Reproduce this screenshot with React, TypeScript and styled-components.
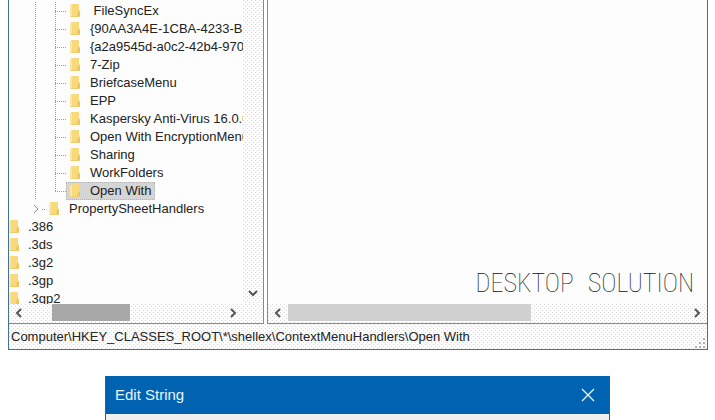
import React from "react";
import styled, { createGlobalStyle, css } from "styled-components";

const GlobalStyle = createGlobalStyle`
  * { box-sizing: border-box; }
  body {
    margin: 0;
    background: #ffffff;
    color: #222222;
    font: 13px/18px "Liberation Sans", Arial, sans-serif;
  }
`;

const stipple = css`
  background-color: #fdfdfd;
  background-image: conic-gradient(at 1px 1px, transparent 75%, #d8d8d8 0),
    conic-gradient(at 1px 1px, transparent 75%, #d8d8d8 0);
  background-position: 0 0, 2px 2px;
  background-size: 4px 4px;
`;

const dotsDown = "repeating-linear-gradient(180deg, #9c9c9c 0 1px, transparent 1px 2px)";
const dotsAcross = "repeating-linear-gradient(90deg, #9c9c9c 0 1px, transparent 1px 2px)";

const Page = styled.div`
  height: 100vh;
  display: flex;
  flex-direction: column;
  align-items: center;
  overflow: hidden;
`;

const RegistryWindow = styled.main`
  align-self: stretch;
  flex: 1;
  min-height: 0;
  margin: 0 7px 26px 8px;
  display: flex;
  flex-direction: column;
  border: 1px solid #3f739b;
  border-top: 0;
`;

const Panes = styled.div`
  flex: 1;
  min-height: 0;
  display: grid;
  grid-template-columns: 255px minmax(0, 1fr);
  gap: 3px;
`;

const Pane = styled.section<{ $side: "left" | "right" }>`
  min-width: 0;
  min-height: 0;
  display: flex;
  flex-direction: column;
  background: #fdfdfd;
  border-bottom: 1px solid #858a94;
  ${({ $side }) => ($side === "left" ? "border-right: 1px solid #858a94;" : "border-left: 1px solid #858a94;")}
`;

const PaneBody = styled.div`
  flex: 1;
  min-height: 0;
  display: flex;
`;

const Tree = styled.ul`
  flex: 1;
  min-width: 0;
  margin: 0;
  padding: 2px 0 0;
  list-style: none;
  overflow: hidden;
`;

const TreeRow = styled.li`
  height: 18px;
  display: flex;
  white-space: nowrap;
`;

const Indent = styled.span`
  flex: none;
  width: 26px;
`;

const Guide = styled.span`
  flex: none;
  width: 20px;
  background: ${dotsDown} 0 0 / 1px 100% no-repeat;
`;

const Branch = styled.span<{ $last?: boolean }>`
  flex: none;
  width: 11px;
  background: ${dotsDown} 0 0 / 1px ${({ $last }) => ($last ? "50%" : "100%")} no-repeat,
    ${dotsAcross} 0 9px / 100% 1px no-repeat;
`;

const Expander = styled.button`
  flex: none;
  width: 14px;
  margin-left: -4px;
  padding: 0;
  border: 0;
  background: ${dotsAcross} 11px 9px / 3px 1px no-repeat;
  display: flex;
  align-items: center;
`;

const Item = styled.span<{ $selected?: boolean; $root?: boolean }>`
  display: flex;
  align-items: center;
  gap: 9px;
  padding: 0 4px;
  ${({ $root }) => $root && "padding-left: 0; gap: 8px;"}
  ${({ $selected }) => $selected && "background: #d5d5d5; outline: 1px dotted #b4b4b4; outline-offset: -1px;"}
`;

const Label = styled.span`
  white-space: pre;
`;

const Bar = styled.div`
  flex: none;
  height: 19px;
  display: flex;
  ${stipple}
`;

const SideBar = styled.div`
  flex: none;
  width: 20px;
  padding-bottom: 2px;
  display: flex;
  flex-direction: column;
  justify-content: flex-end;
  ${stipple}
`;

const ArrowButton = styled.button`
  flex: none;
  width: 20px;
  height: 18px;
  padding: 0;
  border: 0;
  background: transparent;
  display: flex;
  align-items: center;
  justify-content: center;
`;

const Track = styled.div`
  flex: 1;
  display: flex;
`;

const Thumb = styled.div<{ $start: number; $size: number; $tone: string }>`
  margin-left: ${({ $start }) => $start}%;
  width: ${({ $size }) => $size}%;
  height: 17px;
  background: ${({ $tone }) => $tone};
`;

const Corner = styled.div`
  flex: none;
  width: 20px;
`;

const Values = styled.div`
  flex: 1;
  display: flex;
  align-items: flex-end;
  justify-content: flex-end;
  padding: 0 13px 5px;
`;

const Signature = styled.p`
  margin: 0;
  display: flex;
  gap: 14px;
  color: #111111;
  font: 100 26px/32px "Roboto Condensed", Roboto, sans-serif;
  white-space: nowrap;
`;

const StatusBar = styled.footer`
  flex: none;
  height: 25px;
  padding-left: 2px;
  display: flex;
  align-items: center;
  justify-content: space-between;
  ${stipple}
`;

const Grip = styled.svg`
  align-self: flex-end;
`;

const Dialog = styled.section`
  flex: none;
  width: 505px;
  max-width: 100%;
  border: 1px solid #1b64a0;
  border-top: 0;
  border-bottom: 0;
  background: #f0f0f0;
  padding-bottom: 6px;
`;

const TitleBar = styled.header`
  height: 38px;
  padding: 0 5px 0 9px;
  display: flex;
  align-items: center;
  justify-content: space-between;
  background: #0063b1;
`;

const Title = styled.h1`
  margin: 0;
  color: #e8f4fc;
  font-size: 15px;
  font-weight: 400;
`;

const CloseButton = styled.button`
  width: 32px;
  height: 32px;
  padding: 0;
  border: 0;
  background: transparent;
  display: flex;
  align-items: center;
  justify-content: center;
`;

function Folder() {
  return (
    <svg width="11" height="14" viewBox="0 0 11 14" aria-hidden="true">
      <path d="M1 0h8v6l1 1v6H1z" fill="#f8d97c" />
      <path d="M0 1h2v12H0z" fill="#fbe6a4" />
      <path d="M8 7l2 1v5H7z" fill="#edc55f" />
      <path d="M1 12h9v1H1z" fill="#f0cc70" />
    </svg>
  );
}

const turns = { right: 0, down: 90, left: 180 };

function Chevron({ to, color = "#555555", weight = 2 }: { to: keyof typeof turns; color?: string; weight?: number }) {
  return (
    <svg width="10" height="10" viewBox="0 0 10 10" aria-hidden="true">
      <path
        d="M3 1l4 4-4 4"
        transform={`rotate(${turns[to]} 5 5)`}
        fill="none"
        stroke={color}
        strokeWidth={weight}
      />
    </svg>
  );
}

function ScrollBar({ start, size, tone, corner }: { start: number; size: number; tone: string; corner?: boolean }) {
  return (
    <Bar>
      <ArrowButton aria-label="Scroll left"><Chevron to="left" /></ArrowButton>
      <Track><Thumb $start={start} $size={size} $tone={tone} /></Track>
      <ArrowButton aria-label="Scroll right"><Chevron to="right" /></ArrowButton>
      {corner && <Corner />}
    </Bar>
  );
}

const handlers = [
  " FileSyncEx",
  "{90AA3A4E-1CBA-4233-B8BB-535773D48449}",
  "{a2a9545d-a0c2-42b4-9708-a0b2badd77c8}",
  "7-Zip",
  "BriefcaseMenu",
  "EPP",
  "Kaspersky Anti-Virus 16.0.0",
  "Open With EncryptionMenu",
  "Sharing",
  "WorkFolders",
  "Open With",
];

const extensions = [".386", ".3ds", ".3g2", ".3gp", ".3gp2"];

export default function App() {
  return (
    <Page>
      <GlobalStyle />
      <RegistryWindow>
        <Panes>
          <Pane $side="left">
            <PaneBody>
              <Tree>
                {handlers.map((name) => {
                  const selected = name === "Open With";
                  return (
                    <TreeRow key={name}>
                      <Indent />
                      <Guide />
                      <Branch $last={selected} />
                      <Item $selected={selected}><Folder /><Label>{name}</Label></Item>
                    </TreeRow>
                  );
                })}
                <TreeRow>
                  <Indent />
                  <Expander aria-label="Expand PropertySheetHandlers">
                    <Chevron to="right" color="#8a8a8a" weight={1} />
                  </Expander>
                  <Item><Folder /><Label>PropertySheetHandlers</Label></Item>
                </TreeRow>
                {extensions.map((name) => (
                  <TreeRow key={name}>
                    <Item $root><Folder /><Label>{name}</Label></Item>
                  </TreeRow>
                ))}
              </Tree>
              <SideBar>
                <ArrowButton aria-label="Scroll down"><Chevron to="down" /></ArrowButton>
              </SideBar>
            </PaneBody>
            <ScrollBar start={12} size={40} tone="#a8a8a8" corner />
          </Pane>
          <Pane $side="right">
            <Values>
              <Signature><span>DESKTOP</span> <span>SOLUTION</span></Signature>
            </Values>
            <ScrollBar start={0} size={61} tone="#d0d0d0" />
          </Pane>
        </Panes>
        <StatusBar>
          <span>Computer\HKEY_CLASSES_ROOT\*\shellex\ContextMenuHandlers\Open With</span>
          <Grip width="12" height="12" viewBox="0 0 12 12" aria-hidden="true">
            <path d="M8 1h2v2H8zM8 5h2v2H8zM8 9h2v2H8zM4 5h2v2H4zM4 9h2v2H4zM0 9h2v2H0z" fill="#b0b0b0" />
          </Grip>
        </StatusBar>
      </RegistryWindow>
      <Dialog aria-label="Edit String">
        <TitleBar>
          <Title>Edit String</Title>
          <CloseButton aria-label="Close">
            <svg width="14" height="14" viewBox="0 0 14 14" aria-hidden="true">
              <path d="M1 1l12 12M13 1L1 13" stroke="#e8f4fc" strokeWidth="1.4" />
            </svg>
          </CloseButton>
        </TitleBar>
      </Dialog>
    </Page>
  );
}
